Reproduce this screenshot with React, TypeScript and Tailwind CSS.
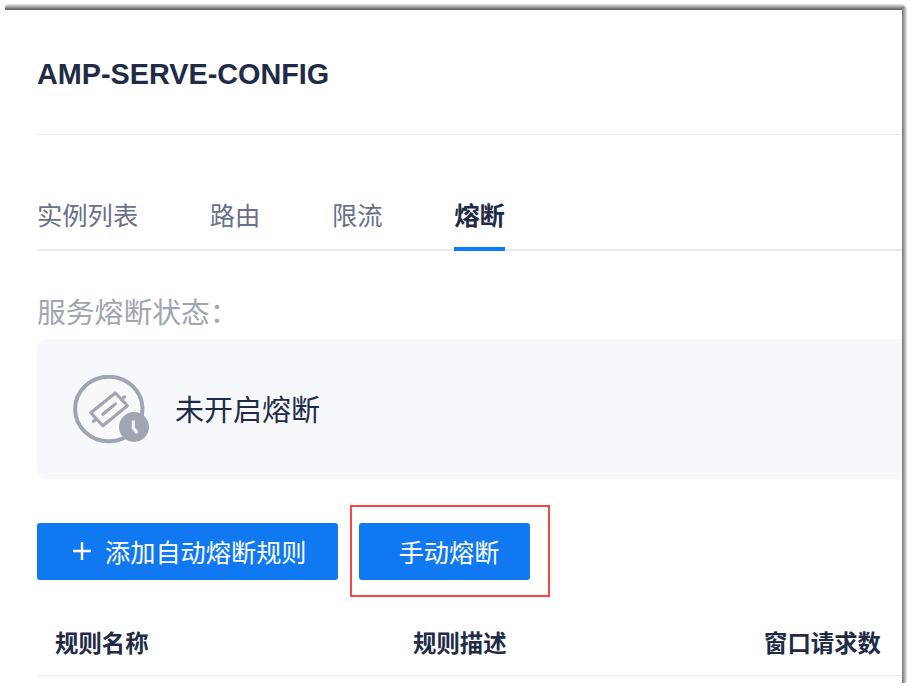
function FuseIcon() {
  return (
    <svg width="78" height="70" viewBox="0 0 78 70" className="mt-[2px] block shrink-0">
      <ellipse cx="35.8" cy="34" rx="33.7" ry="32.3" fill="#f8f8f8" stroke="#a0a5b1" strokeWidth="4" />
      <g stroke="#a0a5b1" strokeWidth="3.1" fill="none" strokeLinecap="round" strokeLinejoin="round">
        <path d="M17.8 37.7 42.3 18 54.4 30.7 29.8 50.7Z" />
        <path d="M29.8 39.3 42.4 29" />
        <path d="M48.6 24.2 51.6 21.8M23.5 43.8 20.4 46.4" />
      </g>
      <circle cx="61" cy="52" r="15" fill="#a0a5b1" />
      <path d="M60.3 45.5V53L64.3 58" fill="none" stroke="#f5f6f9" strokeWidth="3" />
    </svg>
  );
}

const tabs = ["实例列表", "路由", "限流"];

export default function App() {
  return (
    <div className="relative h-[690px] w-[912px] overflow-hidden bg-white font-['Liberation_Sans','Noto_Sans_CJK_SC',sans-serif] text-[#222b45]">
      <main className="h-full w-[902px] pl-[37px] pt-[10px]">
        <header className="h-[125px] border-b border-[#e9ebf2] pt-[48px]">
          <h1 className="whitespace-nowrap text-[28.8px] leading-8 font-bold">AMP-SERVE-CONFIG</h1>
        </header>

        <nav className="mt-[57px] flex h-[59px] gap-[71.6px] border-b-2 border-[#e8ecf1] text-[25.3px] leading-[48px] text-[#697087]">
          {tabs.map((tab) => (
            <span key={tab} className="h-[59px] whitespace-nowrap">{tab}</span>
          ))}
          <span className="h-[59px] border-b-4 border-[#087bff] font-bold text-[#222b45]">熔断</span>
        </nav>

        <p className="mt-[41px] h-[47px] whitespace-nowrap text-[28.8px] leading-[42px] text-[#a0a5b1]">服务熔断状态：</p>

        <section className="flex h-[140px] items-center rounded-l-[9px] bg-[#f7f8fc] pl-[36px]">
          <FuseIcon />
          <span className="ml-[24px] whitespace-nowrap pt-[6px] text-[29px]">未开启熔断</span>
        </section>

        <div className="mt-[26px] flex text-[25.2px] text-white">
          <button className="mt-[18px] flex h-[57px] w-[301px] items-center rounded-[3px] bg-[#1079f1] pl-[36px]">
            <svg width="18" height="18" viewBox="0 0 18 18" className="mb-[2px] mr-[14px] shrink-0">
              <path d="M9 0V18M0 9H18" stroke="white" strokeWidth="2.4" />
            </svg>
            <span className="whitespace-nowrap pt-[4px]">添加自动熔断规则</span>
          </button>
          <div className="ml-[12px] h-[92px] w-[200px] border-2 border-[#fa4545] pl-[7px] pt-[16px]">
            <button className="h-[57px] w-[171px] whitespace-nowrap rounded-[3px] bg-[#1079f1] pl-[9px] pt-[4px]">手动熔断</button>
          </div>
        </div>

        <div className="flex h-[79px] whitespace-nowrap border-b border-[#e9ebf5] pl-[18px] pt-[30px] text-[23.4px] leading-[34px] font-bold">
          <span className="w-[358px]">规则名称</span>
          <span className="w-[351px]">规则描述</span>
          <span>窗口请求数</span>
        </div>
      </main>

      <div className="absolute left-[5px] top-[4px] h-[6px] w-[900px] rounded-tl-[4px] rounded-tr-[3px] bg-linear-to-b from-[#eeeeee] via-[#a0a0a0] to-[#5a5a5a]" />
      <div className="absolute left-[902px] top-[7px] h-[676px] w-[5px] rounded-br-[3px] bg-linear-to-r from-[#777777] via-[#a8a8a8] to-[#f0f0f0]" />
    </div>
  );
}
